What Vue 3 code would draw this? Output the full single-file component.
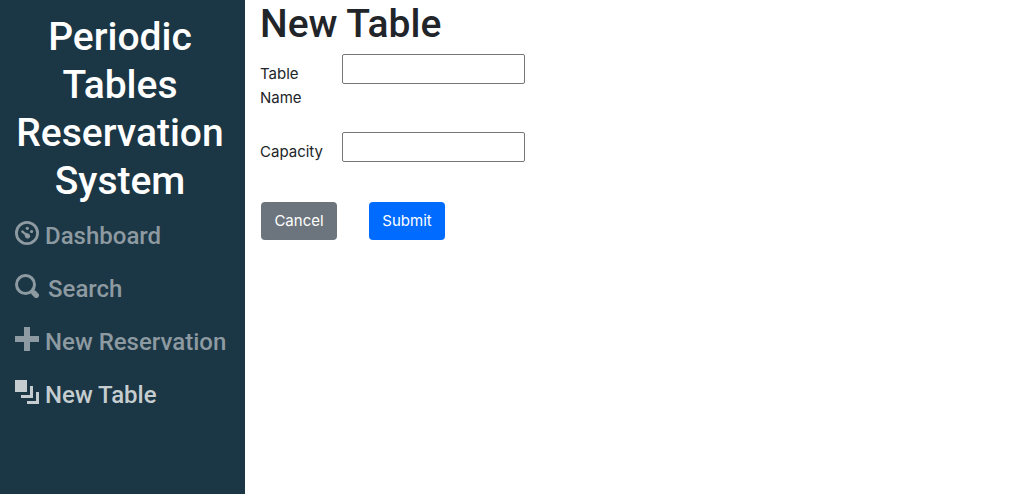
<script setup>
import { ref } from 'vue'

const tableName = ref('')
const capacity = ref('')

function cancel() {
  tableName.value = ''
  capacity.value = ''
}
</script>

<template>
  <div class="layout">
    <aside class="sidebar">
      <a class="brand" href="#">Periodic Tables Reservation System</a>
      <nav class="menu">
        <a class="menu-link" href="#dashboard">
          <svg class="icon" viewBox="0 0 24 24" fill="currentColor" aria-hidden="true">
            <circle cx="12" cy="12" r="10.6" fill="none" stroke="currentColor" stroke-width="2.8" />
            <path d="M6.4 9.8a1.4 1.4 0 0 1 2-.1l1.6 1.7 3.2 1.2c1.9.8 2.6 2.8 1.4 4.1-1.3 1.4-3.9.9-4.5-1l-.7-2.1-2.6-1.8a1.4 1.4 0 0 1-.4-2z" />
            <circle cx="12.3" cy="7.3" r="1.6" />
            <circle cx="16.6" cy="10.5" r="1.6" />
          </svg>
          <span>Dashboard</span>
        </a>
        <a class="menu-link" href="#search">
          <svg class="icon" viewBox="0 0 24 24" fill="none" stroke="currentColor" aria-hidden="true">
            <circle cx="10.5" cy="10.5" r="9" stroke-width="3" />
            <path d="M17 17l1.5 1.5" stroke-width="4" />
            <path d="M19 19l2.3 2.3" stroke-width="5.4" stroke-linecap="round" />
          </svg>
          <span class="wide-gap">Search</span>
        </a>
        <a class="menu-link" href="#reservation">
          <svg class="icon" viewBox="0 0 24 24" fill="currentColor" aria-hidden="true">
            <path d="M9 0h6v9h9v6h-9v9H9v-9H0V9h9z" />
          </svg>
          <span>New Reservation</span>
        </a>
        <a class="menu-link active" href="#table" aria-current="page">
          <svg class="icon" viewBox="0 0 24 24" fill="currentColor" aria-hidden="true">
            <path d="M0 0h12v12H0zM15 6h3v12H6v-3h9zM21 12h3v12H12v-3h9z" />
          </svg>
          <span>New Table</span>
        </a>
      </nav>
    </aside>

    <main class="content">
      <h1>New Table</h1>
      <form @submit.prevent>
        <div class="row">
          <label for="table-name">Table Name</label>
          <input id="table-name" v-model="tableName" type="text" />
        </div>
        <div class="row">
          <label for="capacity">Capacity</label>
          <input id="capacity" v-model="capacity" type="text" />
        </div>
        <div class="actions">
          <button class="cancel" type="button" @click="cancel">Cancel</button>
          <button class="submit" type="submit">Submit</button>
        </div>
      </form>
    </main>
  </div>
</template>

<style>
body {
  margin: 0;
  background: #fff;
}
</style>

<style scoped>
.layout {
  display: flex;
  min-height: 100vh;
  color: #212529;
  font-family: Inter, "Liberation Sans", sans-serif;
  font-size: 15px;
  line-height: 24px;
}

.sidebar {
  box-sizing: border-box;
  flex: 0 0 245px;
  min-width: 0;
  padding: 13px 15px;
  background: #1b3644;
}

.brand {
  display: block;
  padding-right: 5px;
  color: #fff;
  font-family: Roboto, "Liberation Sans", sans-serif;
  font-size: 39px;
  font-weight: 500;
  line-height: 48px;
  text-align: center;
  text-decoration: none;
}

.menu {
  display: flex;
  flex-direction: column;
  gap: 22px;
  margin-top: 16px;
}

.menu-link {
  display: flex;
  gap: 6px;
  color: #8d9aa1;
  font-family: Roboto, "Liberation Sans", sans-serif;
  font-size: 24px;
  font-weight: 500;
  line-height: 31px;
  text-decoration: none;
  white-space: nowrap;
}

.menu-link.active {
  color: #c6cdd0;
}

.icon {
  flex: none;
  width: 24px;
  height: 24px;
}

.wide-gap {
  margin-left: 3px;
}

.content {
  flex: 1;
  min-width: 0;
  padding: 0 15px;
}

h1 {
  margin: 0 0 6px;
  font-family: Roboto, "Liberation Sans", sans-serif;
  font-size: 39px;
  font-weight: 500;
  line-height: 48px;
}

.row {
  display: grid;
  grid-template-columns: 67px 183px;
  column-gap: 15px;
  align-items: start;
  min-height: 54px;
  margin-bottom: 16px;
}

.row:first-child {
  margin-bottom: 22px;
}

label {
  padding-top: 8px;
}

input {
  box-sizing: border-box;
  width: 100%;
  height: 30px;
  padding: 1px 2px;
  border: 1px solid #767676;
  border-radius: 2px;
  background: #fff;
  color: inherit;
  font: inherit;
}

.actions {
  display: flex;
  gap: 32px;
  padding-left: 1px;
}

button {
  min-width: 76px;
  padding: 6px 12px;
  border: 1px solid transparent;
  border-radius: 4px;
  color: #fff;
  font: inherit;
}

.cancel {
  background: #6c757d;
}

.submit {
  background: #006bff;
}
</style>
